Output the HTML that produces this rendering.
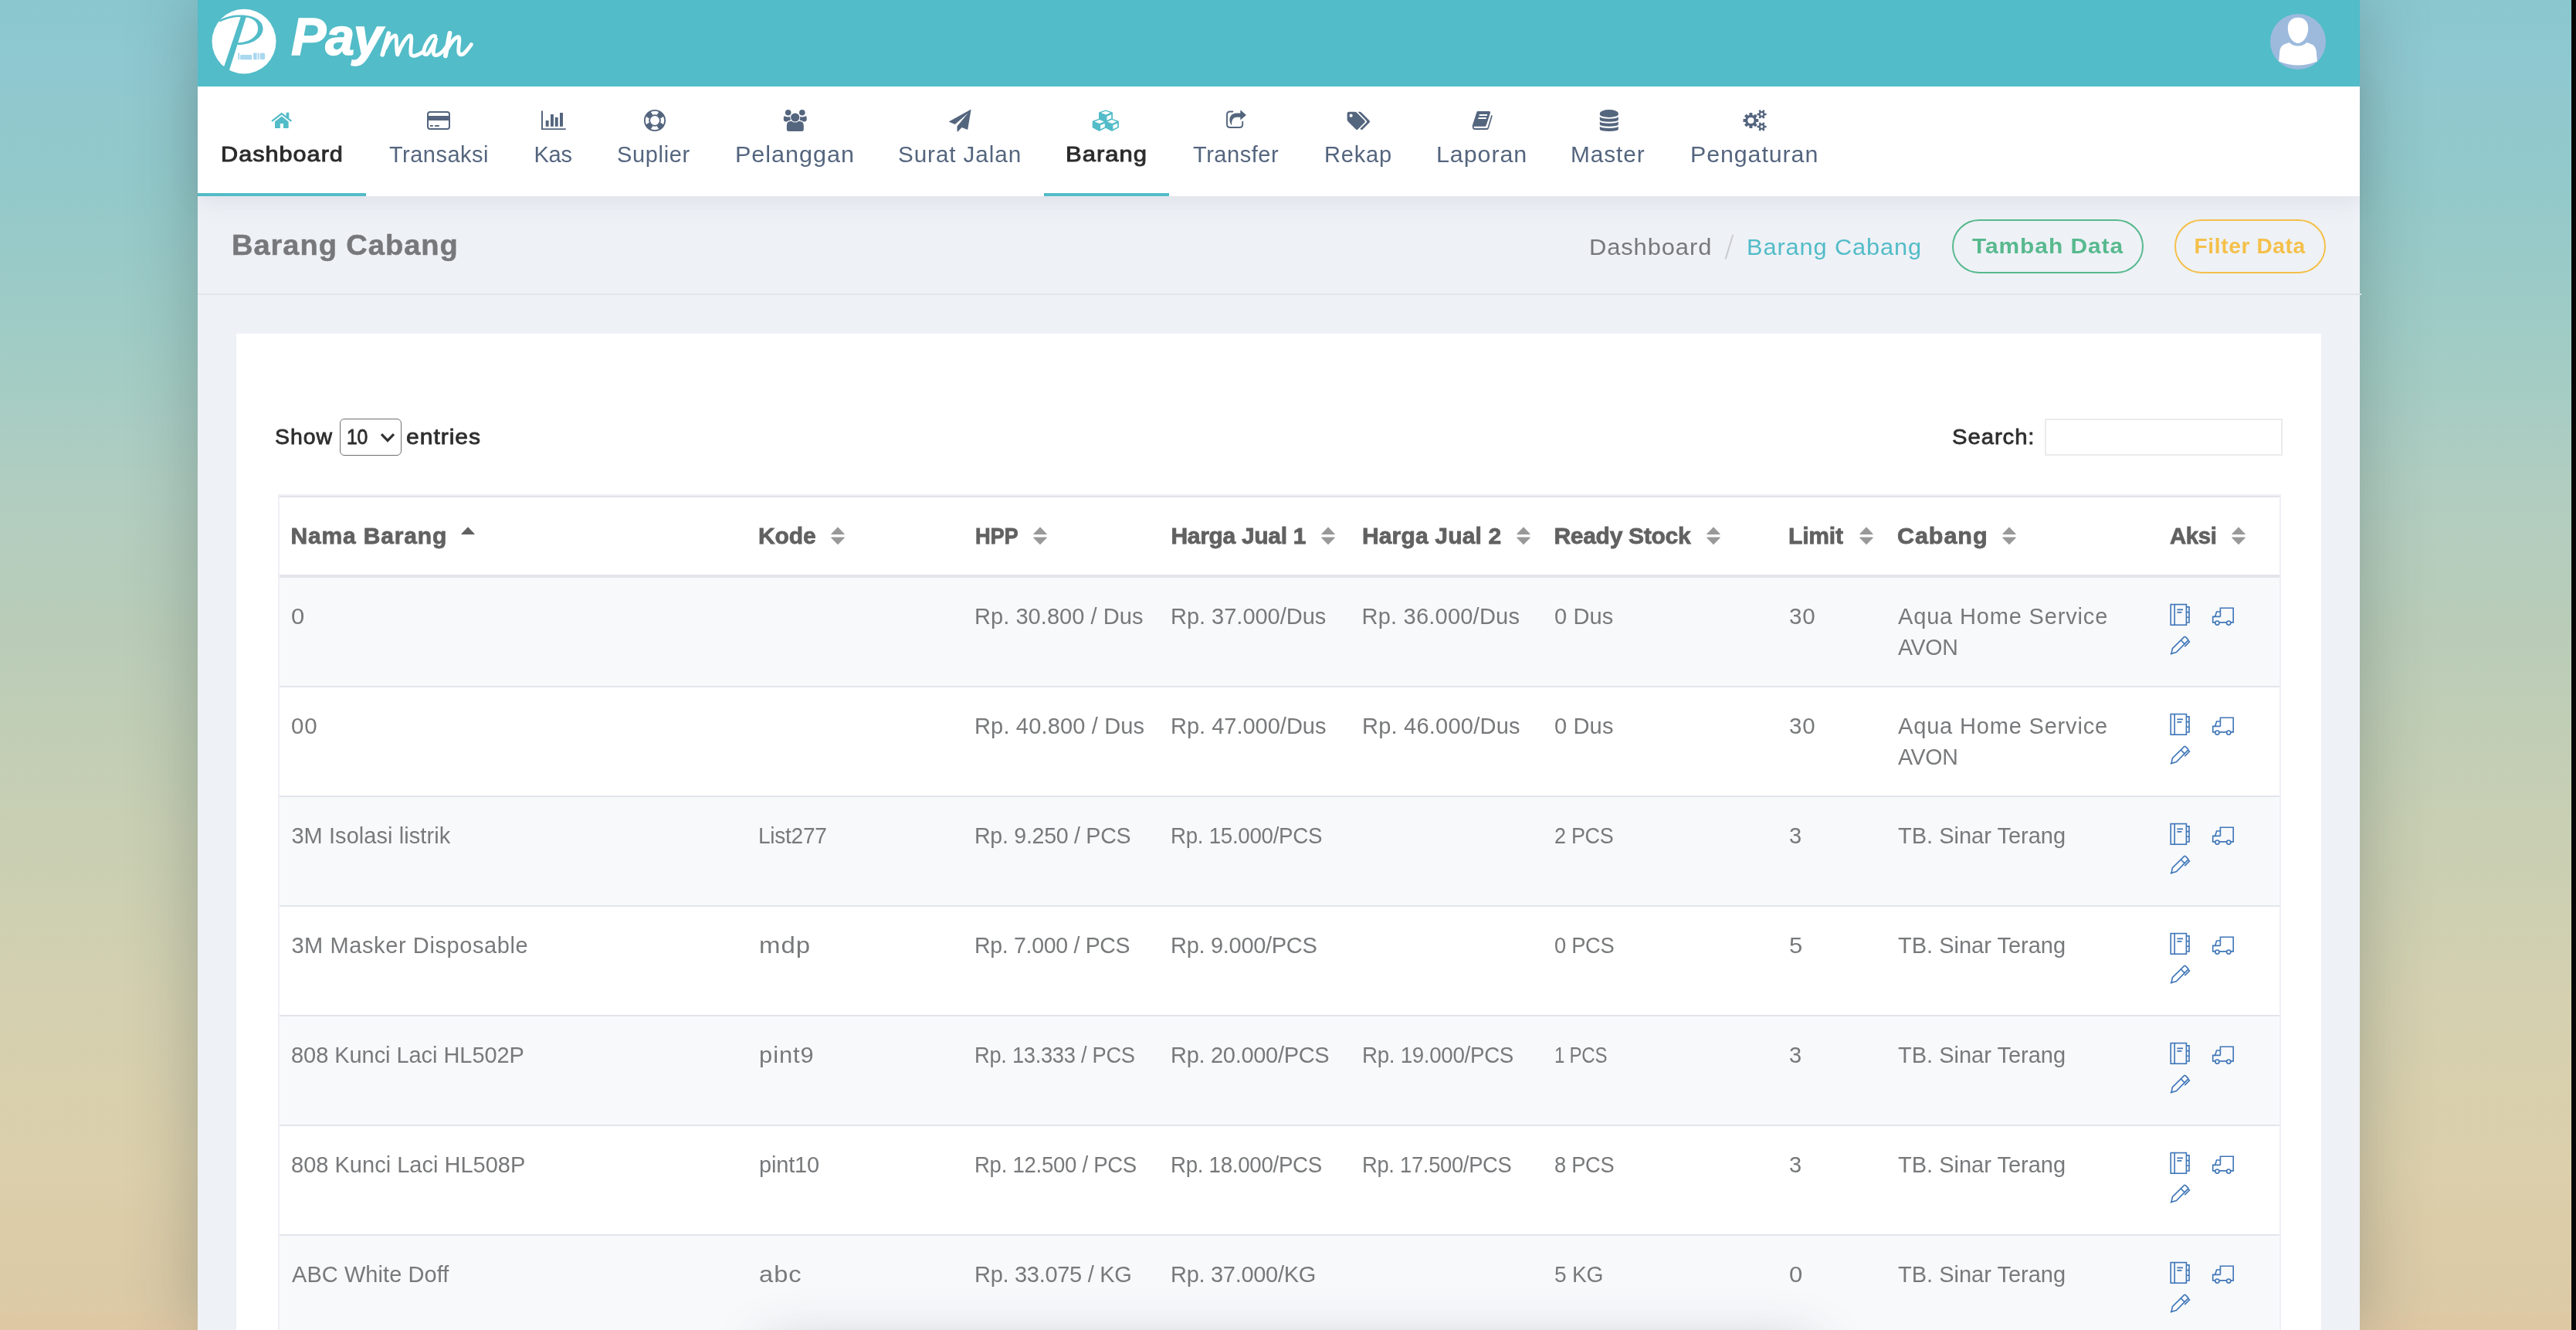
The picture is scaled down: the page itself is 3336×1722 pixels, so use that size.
<!DOCTYPE html>
<html><head><meta charset="utf-8"><title>Payman - Barang Cabang</title>
<style>
html,body{margin:0;padding:0}
body{width:3336px;height:1722px;overflow:hidden;position:relative;font-family:"Liberation Sans",sans-serif;
background:linear-gradient(180deg,#8ac7cf 0%,#8fc8d0 5%,#93c9ca 14%,#a3ccc4 28%,#b0cdc1 36%,#b9ccb8 47%,#c8cfb3 62%,#d4d0b0 75%,#dccfab 88%,#dccca8 93%,#dccaa6 98%,#dfc7a3 100%)}
.a{position:absolute}
.t{position:absolute;white-space:nowrap;line-height:1;display:block;transform-origin:0 50%}
#wrap{position:absolute;left:256px;top:0;width:2800px;height:1722px;background:#eef1f6;box-shadow:0 0 80px 4px rgba(40,60,60,.28)}
#page{position:absolute;left:0;top:0;width:3336px;height:1722px;overflow:hidden;will-change:transform}
</style></head><body>
<div id="wrap"></div>
<div id="page">
<!-- nav -->
<div class="a" style="left:256px;top:112px;width:2800px;height:142px;background:#fff;box-shadow:0 2px 34px rgba(90,100,120,.14)"></div>
<div class="a" style="left:256px;top:250px;width:218px;height:4px;background:#52bcc8"></div>
<div class="a" style="left:1352px;top:250px;width:162px;height:4px;background:#52bcc8"></div>
<!-- home 352-377 x 146-166 -->
<svg class="a" style="left:351px;top:144px" width="28" height="24" viewBox="0 0 28 24" fill="#52bcc8">
<path d="M1.1 12.8L13.8 3.2L26.4 12.8" stroke="#52bcc8" stroke-width="2.3" fill="none" stroke-linejoin="miter"/>
<rect x="19.6" y="1.7" width="3.7" height="7"/>
<path d="M5 13.4L13.8 6.6L22.6 13.4V21.4Q22.6 22.1 21.9 22.1H16V16H11.8V22.1H5.7Q5 22.1 5 21.4Z"/>
</svg>
<!-- credit card 553-582.7 x 144-168 -->
<svg class="a" style="left:552px;top:143px" width="32" height="26" viewBox="0 0 32 26">
<rect x="2" y="2" width="28" height="22" rx="3" ry="3" fill="none" stroke="#54657e" stroke-width="2"/>
<rect x="2" y="7" width="28" height="6" fill="#54657e"/>
<rect x="5" y="19" width="3.8" height="1.9" fill="#54657e"/><rect x="11" y="19" width="5.8" height="1.9" fill="#54657e"/>
</svg>
<!-- bar chart 701-733 x 143.6-168 -->
<svg class="a" style="left:700px;top:142px" width="34" height="27" viewBox="0 0 34 27" fill="#54657e">
<path d="M1 1.6H3V24.2H32.8V26H1Z"/>
<rect x="6.7" y="14" width="3.9" height="7.8"/><rect x="13" y="6" width="3.9" height="15.8"/><rect x="18.8" y="9.9" width="3.9" height="11.9"/><rect x="25" y="4" width="4" height="17.8"/>
</svg>
<!-- life ring center 847.9,155.9 r 14.1 -->
<svg class="a" style="left:832px;top:140px" width="32" height="32" viewBox="-16 -16 32 32">
<circle r="13.1" fill="none" stroke="#54657e" stroke-width="1.9"/>
<circle r="6.9" fill="none" stroke="#54657e" stroke-width="1.9"/>
<g fill="#54657e">
<path id="lr" d="M-3.3 -7.2H3.3L4.4 -12.7H-4.4Z" transform="rotate(45)"/>
<use href="#lr" transform="rotate(90)"/><use href="#lr" transform="rotate(180)"/><use href="#lr" transform="rotate(270)"/>
</g></svg>
<!-- users 1014.6-1045 x 141.6-170 -->
<svg class="a" style="left:1013px;top:140px" width="34" height="32" viewBox="0 0 34 32" fill="#54657e">
<circle cx="7.7" cy="5.8" r="3.8"/><circle cx="25.8" cy="5.8" r="3.8"/>
<path d="M1.9 11.4Q2.4 10.2 3.4 10.4Q7.7 12.4 11 10.6V17.6H4.4Q1.8 17.4 1.8 15Z"/>
<path d="M31.6 11.4Q31.1 10.2 30.1 10.4Q25.8 12.4 22.5 10.6V17.6H29.1Q31.7 17.4 31.7 15Z"/>
<path d="M5.2 27.4V23C5.2 18.6 7.3 16.4 10.5 16.3H22.9C26.1 16.4 28.4 18.6 28.4 23V27.4Q28.4 30.5 25.2 30.5H8.4Q5.2 30.5 5.2 27.4Z" stroke="#fff" stroke-width="1.2"/>
<circle cx="16.7" cy="12" r="6.6" fill="#fff"/>
<circle cx="16.7" cy="12" r="5.6"/>
</svg>
<!-- paper plane 1229-1257.3 x 141.7-170.2 -->
<svg class="a" style="left:1228px;top:140px" width="32" height="32" viewBox="0 0 32 32" fill="#54657e">
<path d="M29.2 1.8Q29.6 1.5 29.5 2.2L25.3 27.2Q25.1 28 24.4 27.7L17.6 24.9L12.6 30.2Q11.6 31 11.5 29.7V23.4L25.6 6.4L8.8 21.1L1.6 18.1Q0.6 17.5 1.6 16.9Z"/>
</svg>
<!-- cubes 1415-1449 x 141.7-169.8 -->
<svg class="a" style="left:1414px;top:140px" width="36" height="32" viewBox="0 0 36 32">
<g transform="translate(17.96 -11.37)"><path d="M0 14.6L8.1 17.4V24.8L0 28.9L-8.1 24.8V17.4Z" fill="#52bcc8" stroke="#52bcc8" stroke-width="1.8" stroke-linejoin="round"/><path d="M-6 17.45L0 15.1L6.2 17.45L0.2 19.95Z" fill="#fff"/><path d="M1.45 22.1L7.2 19.65V24.5L1.45 27.3Z" fill="#fff"/></g>
<g transform="translate(9.66 0)"><path d="M0 14.6L8.1 17.4V24.8L0 28.9L-8.1 24.8V17.4Z" fill="#52bcc8" stroke="#52bcc8" stroke-width="1.8" stroke-linejoin="round"/><path d="M-6 17.45L0 15.1L6.2 17.45L0.2 19.95Z" fill="#fff"/><path d="M1.45 22.1L7.2 19.65V24.5L1.45 27.3Z" fill="#fff"/></g>
<g transform="translate(25.9 0)"><path d="M0 14.6L8.1 17.4V24.8L0 28.9L-8.1 24.8V17.4Z" fill="#52bcc8" stroke="#52bcc8" stroke-width="1.8" stroke-linejoin="round"/><path d="M-6 17.45L0 15.1L6.2 17.45L0.2 19.95Z" fill="#fff"/><path d="M1.45 22.1L7.2 19.65V24.5L1.45 27.3Z" fill="#fff"/></g>
</svg>
<!-- share-square-o 1587.8-1614 x 141.7-166 -->
<svg class="a" style="left:1586px;top:140px" width="30" height="28" viewBox="0 0 30 28">
<path d="M10.4 4.45H7Q2.95 4.45 2.95 8.5V21Q2.95 25 7 25H19.2Q23.2 25 23.2 21V17.8" fill="none" stroke="#54657e" stroke-width="1.9" stroke-linecap="round"/>
<path d="M20.3 2.3L27.9 9L20.3 15.6V11.7H15.5C11.5 11.9 9.6 14.6 9.2 18.2Q9.1 20.5 9 21.8Q8.6 22.1 8.3 21.4C6.4 17.6 5.6 13.6 7.6 10.4C9.4 7.4 12.2 6.5 15.5 6.4H20.3Z" fill="#54657e"/>
</svg>
<!-- tags 1744.5-1774.7 x 143.6-168 -->
<svg class="a" style="left:1743px;top:142.7px" width="34" height="28" viewBox="0 0 34 28" fill="#54657e">
<path d="M1.6 4.4Q1.6 1.8 4.2 1.8H11.6Q13 1.8 14.2 3L24.4 13.2Q25.4 14.4 24.4 15.6L15.4 24.6Q14.2 25.6 13 24.6L2.800000000000001 14.4Q1.6 13.2 1.6 11.8ZM6.6 4.6A2.1 2.1 0 1 0 6.6 8.8A2.1 2.1 0 1 0 6.6 4.600000000000001Z" fill-rule="evenodd"/>
<path d="M15.4 1.8H17.8Q19.2 1.8 20.4 3L30.6 13.2Q31.6 14.4 30.6 15.6L21.6 24.6Q20.4 25.6 19.2 24.6L18.4 23.8L26.8 15.4Q27.6 14.4 26.8 13.4Z"/>
</svg>
<!-- book 1906.3-1932.4 x 143.6-168 -->
<svg class="a" style="left:1905px;top:142px" width="30" height="28" viewBox="0 0 30 28" fill="#54657e">
<path d="M8.8 2H23.2Q25.6 2 24.9 4.4L19.7 20.3Q19.2 21.8 17.5 21.8H4.4Q3.3 22.3 3.6 23.2Q4 24.1 5 24.1H20Q21.2 24.1 21.6 23L26.1 7.8Q26.5 6.5 27.2 7.1Q27.9 7.8 27.6 8.8L23 24Q22.4 25.9 20.4 25.9H4.8Q2 25.9 1.8 22.8Q1.6 21 2 19.8L7.5 3Q7.9 2 8.8 2Z"/>
<path d="M10.9 5.9H21.3L20.7 7.9H10.3ZM9.7 10H20.1L19.5 12H9.1Z" fill="#fff"/>
</svg>
<!-- database 2071.3-2096.2 x 141.8-169.7 -->
<svg class="a" style="left:2070px;top:140px" width="28" height="32" viewBox="0 0 28 32" fill="#54657e">
<path d="M1.8 6.9A12 4.85 0 0 1 25.8 6.9V8.2A12 3.7 0 0 1 1.8 8.2Z"/>
<path d="M1.8 11.10A12 2.6 0 0 0 25.8 11.10V15.20A12 2.5 0 0 1 1.8 15.20Z"/>
<path d="M1.8 17.24A12 2.6 0 0 0 25.8 17.24V21.34A12 2.5 0 0 1 1.8 21.34Z"/>
<path d="M1.8 23.38A12 2.6 0 0 0 25.8 23.38V27.48A12 2.5 0 0 1 1.8 27.48Z"/>
</svg>
<!-- cogs 2257.4-2288.4 x 141.8-170 -->
<svg class="a" style="left:2256px;top:140px" width="34" height="32" viewBox="0 0 34 32" fill="#54657e">
<g transform="translate(11.4 16.0)"><path fill-rule="evenodd" d="M-7.3 0A7.3 7.3 0 1 0 7.3 0A7.3 7.3 0 1 0 -7.3 0ZM-4.1 0A4.1 4.1 0 1 0 4.1 0A4.1 4.1 0 1 0 -4.1 0Z"/><rect x="-2.00" y="-9.90" width="4.00" height="3.80" rx="0.5" transform="rotate(0.0)"/><rect x="-2.00" y="-9.90" width="4.00" height="3.80" rx="0.5" transform="rotate(45.0)"/><rect x="-2.00" y="-9.90" width="4.00" height="3.80" rx="0.5" transform="rotate(90.0)"/><rect x="-2.00" y="-9.90" width="4.00" height="3.80" rx="0.5" transform="rotate(135.0)"/><rect x="-2.00" y="-9.90" width="4.00" height="3.80" rx="0.5" transform="rotate(180.0)"/><rect x="-2.00" y="-9.90" width="4.00" height="3.80" rx="0.5" transform="rotate(225.0)"/><rect x="-2.00" y="-9.90" width="4.00" height="3.80" rx="0.5" transform="rotate(270.0)"/><rect x="-2.00" y="-9.90" width="4.00" height="3.80" rx="0.5" transform="rotate(315.0)"/></g>
<g transform="translate(25.5 7.9)"><path fill-rule="evenodd" d="M-3.9 0A3.9 3.9 0 1 0 3.9 0A3.9 3.9 0 1 0 -3.9 0ZM-1.8 0A1.8 1.8 0 1 0 1.8 0A1.8 1.8 0 1 0 -1.8 0Z"/><rect x="-1.25" y="-6.00" width="2.50" height="3.30" rx="0.5" transform="rotate(30.0)"/><rect x="-1.25" y="-6.00" width="2.50" height="3.30" rx="0.5" transform="rotate(90.0)"/><rect x="-1.25" y="-6.00" width="2.50" height="3.30" rx="0.5" transform="rotate(150.0)"/><rect x="-1.25" y="-6.00" width="2.50" height="3.30" rx="0.5" transform="rotate(210.0)"/><rect x="-1.25" y="-6.00" width="2.50" height="3.30" rx="0.5" transform="rotate(270.0)"/><rect x="-1.25" y="-6.00" width="2.50" height="3.30" rx="0.5" transform="rotate(330.0)"/></g>
<g transform="translate(25.5 23.95)"><path fill-rule="evenodd" d="M-3.9 0A3.9 3.9 0 1 0 3.9 0A3.9 3.9 0 1 0 -3.9 0ZM-1.8 0A1.8 1.8 0 1 0 1.8 0A1.8 1.8 0 1 0 -1.8 0Z"/><rect x="-1.25" y="-6.00" width="2.50" height="3.30" rx="0.5" transform="rotate(30.0)"/><rect x="-1.25" y="-6.00" width="2.50" height="3.30" rx="0.5" transform="rotate(90.0)"/><rect x="-1.25" y="-6.00" width="2.50" height="3.30" rx="0.5" transform="rotate(150.0)"/><rect x="-1.25" y="-6.00" width="2.50" height="3.30" rx="0.5" transform="rotate(210.0)"/><rect x="-1.25" y="-6.00" width="2.50" height="3.30" rx="0.5" transform="rotate(270.0)"/><rect x="-1.25" y="-6.00" width="2.50" height="3.30" rx="0.5" transform="rotate(330.0)"/></g>
</svg>

<div class="a" style="left:256px;top:0;width:2800px;height:112px;background:#52bcc8"></div>
<svg class="a" style="left:266px;top:4px" width="100" height="100" viewBox="0 0 1330 1330">
<ellipse cx="665" cy="660" rx="552" ry="556" fill="#fff"/>
<g fill="#52bcc8">
<path d="M612 226L702 238L390 1222L296 1168Z"/>
<path d="M236 296C400 210 560 196 700 213C880 233 992 320 992 442C992 592 800 724 556 718L540 682C760 684 902 572 906 442C908 330 830 260 700 246C560 230 420 244 252 326Z"/>
</g>
<g fill="#a9d8f0"><rect x="562" y="858" width="26" height="116"/><rect x="600" y="892" width="200" height="82" rx="14"/><rect x="826" y="858" width="60" height="116" rx="10"/><rect x="900" y="858" width="26" height="116"/><rect x="940" y="858" width="86" height="116" rx="30"/></g>
</svg>
<span class="t" style="left:377px;top:12.9px;font-size:68px;font-weight:700;font-style:italic;color:#fff;letter-spacing:-1.2px;-webkit-text-stroke:1.4px #fff">Pay</span>
<svg class="a" style="left:480px;top:20px" width="150" height="75" viewBox="0 0 2576 1288" fill="none" stroke="#fff" stroke-width="84" stroke-linecap="round" stroke-linejoin="round">
<path d="M400 400L262 872" stroke-width="100"/>
<path d="M330 720C400 570 480 452 548 444C592 444 556 700 596 872"/>
<path d="M604 860C660 700 800 452 878 444C950 444 858 800 900 872C930 925 1020 900 1180 800"/>
<path d="M1436 462C1350 410 1200 650 1182 800C1172 896 1260 880 1300 820C1380 700 1430 580 1452 524C1420 650 1380 800 1400 856C1430 925 1560 880 1680 700"/>
<path d="M1760 392L1664 900" stroke-width="100"/>
<path d="M1720 730C1800 566 1900 476 1950 476C2008 484 1930 760 1960 828C1990 896 2060 880 2120 800C2170 740 2210 690 2240 644" />
</svg>

<svg class="a" style="left:2940px;top:18px" width="72" height="72" viewBox="0 0 72 72">
<defs><clipPath id="avc"><circle cx="36" cy="36" r="36"/></clipPath></defs>
<circle cx="36" cy="36" r="36" fill="#9dbadd"/>
<g clip-path="url(#avc)" fill="#fff">
<path d="M36 4.8C45 4.8 49.6 11 49.2 19.6C48.8 29 43 38 36 38C29 38 23.200000000000003 29 22.8 19.6C22.4 11 27 4.8 36 4.8Z"/>
<path d="M24.6 37C27 39.6 31 41.6 36 41.6C41 41.6 45 39.6 47.4 37L54 39.6C58 41.4 59.2 45 59.8 49L60.8 61.6Q48 66.6 36 66.6Q24 66.6 11.2 61.6L12.2 49C12.8 45 14 41.4 18 39.6Z"/>
</g></svg>

<!-- title bar -->
<div class="a" style="left:256px;top:380px;width:2802px;height:2px;background:#e2e5ea"></div>
<div class="a" style="left:2528px;top:284px;width:244px;height:66px;border:2px solid #57b98e;border-radius:36px"></div>
<div class="a" style="left:2816px;top:284px;width:192px;height:66px;border:2px solid #f4c04a;border-radius:36px"></div>
<svg class="a" style="left:2230px;top:300px" width="20" height="40" viewBox="0 0 20 40"><path d="M4.6 35.5L14.2 4" stroke="#c9cbce" stroke-width="2" fill="none"/></svg>
<!-- card -->
<div class="a" style="left:306px;top:432px;width:2700px;height:1300px;background:#fff"></div>
<!-- select -->
<div class="a" style="left:440px;top:542px;width:77.5px;height:45.5px;border:1.5px solid #6f6f6f;border-radius:6px;background:#fff"></div>
<svg class="a" style="left:490px;top:558px" width="24" height="18" viewBox="0 0 24 18"><path d="M4 4.2L12 12.4L20 4.2" stroke="#333" stroke-width="3.2" fill="none"/></svg>
<!-- search -->
<div class="a" style="left:2648px;top:542px;width:304px;height:44px;border:2px solid #ebebeb;background:#fff"></div>
<!-- table frame -->
<div class="a" style="left:360px;top:640px;width:2594px;height:1100px;border-left:2px solid #eff0f6;border-right:2px solid #eff0f6;border-top:2px solid #eff0f6;box-sizing:border-box;background:#fff"></div>
<div class="a" style="left:362px;top:642px;width:2590px;height:2px;background:#e3e4e9"></div>
<div class="a" style="left:362px;top:744px;width:2590px;height:4px;background:#e4e5ea"></div>
<div class="a" style="left:362px;top:748px;width:2590px;height:140px;background:#f8f9fb"></div>
<div class="a" style="left:362px;top:890px;width:2590px;height:140px;background:#ffffff"></div>
<div class="a" style="left:362px;top:888px;width:2590px;height:2px;background:#e3e5ea"></div>
<div class="a" style="left:362px;top:1032px;width:2590px;height:140px;background:#f8f9fb"></div>
<div class="a" style="left:362px;top:1030px;width:2590px;height:2px;background:#e3e5ea"></div>
<div class="a" style="left:362px;top:1174px;width:2590px;height:140px;background:#ffffff"></div>
<div class="a" style="left:362px;top:1172px;width:2590px;height:2px;background:#e3e5ea"></div>
<div class="a" style="left:362px;top:1316px;width:2590px;height:140px;background:#f8f9fb"></div>
<div class="a" style="left:362px;top:1314px;width:2590px;height:2px;background:#e3e5ea"></div>
<div class="a" style="left:362px;top:1458px;width:2590px;height:140px;background:#ffffff"></div>
<div class="a" style="left:362px;top:1456px;width:2590px;height:2px;background:#e3e5ea"></div>
<div class="a" style="left:362px;top:1600px;width:2590px;height:140px;background:#f8f9fb"></div>
<div class="a" style="left:362px;top:1598px;width:2590px;height:2px;background:#e3e5ea"></div>

<svg class="a" style="left:1075.8px;top:682.1px" width="18" height="24" viewBox="0 0 18 24"><path d="M9 0.3L17.6 9.2Q18 10 17 10H1Q0 10 .4 9.2Z" fill="#999"/><path d="M9 23.3L17.6 14.4Q18 13.6 17 13.6H1Q0 13.6 .4 14.4Z" fill="#999"/></svg>
<svg class="a" style="left:1338.0px;top:682.1px" width="18" height="24" viewBox="0 0 18 24"><path d="M9 0.3L17.6 9.2Q18 10 17 10H1Q0 10 .4 9.2Z" fill="#999"/><path d="M9 23.3L17.6 14.4Q18 13.6 17 13.6H1Q0 13.6 .4 14.4Z" fill="#999"/></svg>
<svg class="a" style="left:1710.6px;top:682.1px" width="18" height="24" viewBox="0 0 18 24"><path d="M9 0.3L17.6 9.2Q18 10 17 10H1Q0 10 .4 9.2Z" fill="#999"/><path d="M9 23.3L17.6 14.4Q18 13.6 17 13.6H1Q0 13.6 .4 14.4Z" fill="#999"/></svg>
<svg class="a" style="left:1964.3px;top:682.1px" width="18" height="24" viewBox="0 0 18 24"><path d="M9 0.3L17.6 9.2Q18 10 17 10H1Q0 10 .4 9.2Z" fill="#999"/><path d="M9 23.3L17.6 14.4Q18 13.6 17 13.6H1Q0 13.6 .4 14.4Z" fill="#999"/></svg>
<svg class="a" style="left:2209.6px;top:682.1px" width="18" height="24" viewBox="0 0 18 24"><path d="M9 0.3L17.6 9.2Q18 10 17 10H1Q0 10 .4 9.2Z" fill="#999"/><path d="M9 23.3L17.6 14.4Q18 13.6 17 13.6H1Q0 13.6 .4 14.4Z" fill="#999"/></svg>
<svg class="a" style="left:2407.5px;top:682.1px" width="18" height="24" viewBox="0 0 18 24"><path d="M9 0.3L17.6 9.2Q18 10 17 10H1Q0 10 .4 9.2Z" fill="#999"/><path d="M9 23.3L17.6 14.4Q18 13.6 17 13.6H1Q0 13.6 .4 14.4Z" fill="#999"/></svg>
<svg class="a" style="left:2592.5px;top:682.1px" width="18" height="24" viewBox="0 0 18 24"><path d="M9 0.3L17.6 9.2Q18 10 17 10H1Q0 10 .4 9.2Z" fill="#999"/><path d="M9 23.3L17.6 14.4Q18 13.6 17 13.6H1Q0 13.6 .4 14.4Z" fill="#999"/></svg>
<svg class="a" style="left:2890.3px;top:682.1px" width="18" height="24" viewBox="0 0 18 24"><path d="M9 0.3L17.6 9.2Q18 10 17 10H1Q0 10 .4 9.2Z" fill="#999"/><path d="M9 23.3L17.6 14.4Q18 13.6 17 13.6H1Q0 13.6 .4 14.4Z" fill="#999"/></svg><svg class="a" style="left:597px;top:682.1px" width="18" height="10" viewBox="0 0 18 10"><path d="M9 0.3L17.6 9.2Q18 10 17 10H1Q0 10 .4 9.2Z" fill="#616161"/></svg>
<svg class="a" style="left:2809px;top:780px" width="29" height="32" viewBox="0 0 29 32" fill="none" stroke="#4077b8" stroke-width="1.65"><rect x="2.2" y="2.6" width="20.2" height="26.6"/><path d="M7.2 2.6V29.2"/><path d="M22.4 5.8H26V26H22.4"/><path d="M22.4 12.6H26M22.4 19.2H26"/><path d="M10.4 9.4H18M10.4 12.8H16.4"/></svg><svg class="a" style="left:2863px;top:784px" width="32" height="28" viewBox="0 0 32 28" fill="none" stroke="#4077b8" stroke-width="1.65"><path d="M12.4 14.4V3.2H29.2V21.8H26"/><path d="M12.4 14.4H5.6L7.6 8H12.4"/><path d="M5.6 14.4H2.7V21.8H5.6M11.2 21.8H20.4"/><circle cx="8.4" cy="22.6" r="2.6"/><circle cx="23.2" cy="22.6" r="2.6"/></svg><svg class="a" style="left:2809px;top:822px" width="29" height="28" viewBox="0 0 29 28" fill="none" stroke="#4077b8" stroke-width="1.65" stroke-linejoin="miter"><path d="M3 24.4L4.4 17.6L19.6 2.6Q20.4 1.9 21.2 2.6L24.4 5.8Q25 6.6 24.4 7.4L9.4 22.6Z"/><path d="M15.4 7L20.2 11.8"/><path d="M2 25.2L4 23.4"/><path d="M24.6 7.2L26.4 9L20.2 15.2"/></svg>
<svg class="a" style="left:2809px;top:922px" width="29" height="32" viewBox="0 0 29 32" fill="none" stroke="#4077b8" stroke-width="1.65"><rect x="2.2" y="2.6" width="20.2" height="26.6"/><path d="M7.2 2.6V29.2"/><path d="M22.4 5.8H26V26H22.4"/><path d="M22.4 12.6H26M22.4 19.2H26"/><path d="M10.4 9.4H18M10.4 12.8H16.4"/></svg><svg class="a" style="left:2863px;top:926px" width="32" height="28" viewBox="0 0 32 28" fill="none" stroke="#4077b8" stroke-width="1.65"><path d="M12.4 14.4V3.2H29.2V21.8H26"/><path d="M12.4 14.4H5.6L7.6 8H12.4"/><path d="M5.6 14.4H2.7V21.8H5.6M11.2 21.8H20.4"/><circle cx="8.4" cy="22.6" r="2.6"/><circle cx="23.2" cy="22.6" r="2.6"/></svg><svg class="a" style="left:2809px;top:964px" width="29" height="28" viewBox="0 0 29 28" fill="none" stroke="#4077b8" stroke-width="1.65" stroke-linejoin="miter"><path d="M3 24.4L4.4 17.6L19.6 2.6Q20.4 1.9 21.2 2.6L24.4 5.8Q25 6.6 24.4 7.4L9.4 22.6Z"/><path d="M15.4 7L20.2 11.8"/><path d="M2 25.2L4 23.4"/><path d="M24.6 7.2L26.4 9L20.2 15.2"/></svg>
<svg class="a" style="left:2809px;top:1064px" width="29" height="32" viewBox="0 0 29 32" fill="none" stroke="#4077b8" stroke-width="1.65"><rect x="2.2" y="2.6" width="20.2" height="26.6"/><path d="M7.2 2.6V29.2"/><path d="M22.4 5.8H26V26H22.4"/><path d="M22.4 12.6H26M22.4 19.2H26"/><path d="M10.4 9.4H18M10.4 12.8H16.4"/></svg><svg class="a" style="left:2863px;top:1068px" width="32" height="28" viewBox="0 0 32 28" fill="none" stroke="#4077b8" stroke-width="1.65"><path d="M12.4 14.4V3.2H29.2V21.8H26"/><path d="M12.4 14.4H5.6L7.6 8H12.4"/><path d="M5.6 14.4H2.7V21.8H5.6M11.2 21.8H20.4"/><circle cx="8.4" cy="22.6" r="2.6"/><circle cx="23.2" cy="22.6" r="2.6"/></svg><svg class="a" style="left:2809px;top:1106px" width="29" height="28" viewBox="0 0 29 28" fill="none" stroke="#4077b8" stroke-width="1.65" stroke-linejoin="miter"><path d="M3 24.4L4.4 17.6L19.6 2.6Q20.4 1.9 21.2 2.6L24.4 5.8Q25 6.6 24.4 7.4L9.4 22.6Z"/><path d="M15.4 7L20.2 11.8"/><path d="M2 25.2L4 23.4"/><path d="M24.6 7.2L26.4 9L20.2 15.2"/></svg>
<svg class="a" style="left:2809px;top:1206px" width="29" height="32" viewBox="0 0 29 32" fill="none" stroke="#4077b8" stroke-width="1.65"><rect x="2.2" y="2.6" width="20.2" height="26.6"/><path d="M7.2 2.6V29.2"/><path d="M22.4 5.8H26V26H22.4"/><path d="M22.4 12.6H26M22.4 19.2H26"/><path d="M10.4 9.4H18M10.4 12.8H16.4"/></svg><svg class="a" style="left:2863px;top:1210px" width="32" height="28" viewBox="0 0 32 28" fill="none" stroke="#4077b8" stroke-width="1.65"><path d="M12.4 14.4V3.2H29.2V21.8H26"/><path d="M12.4 14.4H5.6L7.6 8H12.4"/><path d="M5.6 14.4H2.7V21.8H5.6M11.2 21.8H20.4"/><circle cx="8.4" cy="22.6" r="2.6"/><circle cx="23.2" cy="22.6" r="2.6"/></svg><svg class="a" style="left:2809px;top:1248px" width="29" height="28" viewBox="0 0 29 28" fill="none" stroke="#4077b8" stroke-width="1.65" stroke-linejoin="miter"><path d="M3 24.4L4.4 17.6L19.6 2.6Q20.4 1.9 21.2 2.6L24.4 5.8Q25 6.6 24.4 7.4L9.4 22.6Z"/><path d="M15.4 7L20.2 11.8"/><path d="M2 25.2L4 23.4"/><path d="M24.6 7.2L26.4 9L20.2 15.2"/></svg>
<svg class="a" style="left:2809px;top:1348px" width="29" height="32" viewBox="0 0 29 32" fill="none" stroke="#4077b8" stroke-width="1.65"><rect x="2.2" y="2.6" width="20.2" height="26.6"/><path d="M7.2 2.6V29.2"/><path d="M22.4 5.8H26V26H22.4"/><path d="M22.4 12.6H26M22.4 19.2H26"/><path d="M10.4 9.4H18M10.4 12.8H16.4"/></svg><svg class="a" style="left:2863px;top:1352px" width="32" height="28" viewBox="0 0 32 28" fill="none" stroke="#4077b8" stroke-width="1.65"><path d="M12.4 14.4V3.2H29.2V21.8H26"/><path d="M12.4 14.4H5.6L7.6 8H12.4"/><path d="M5.6 14.4H2.7V21.8H5.6M11.2 21.8H20.4"/><circle cx="8.4" cy="22.6" r="2.6"/><circle cx="23.2" cy="22.6" r="2.6"/></svg><svg class="a" style="left:2809px;top:1390px" width="29" height="28" viewBox="0 0 29 28" fill="none" stroke="#4077b8" stroke-width="1.65" stroke-linejoin="miter"><path d="M3 24.4L4.4 17.6L19.6 2.6Q20.4 1.9 21.2 2.6L24.4 5.8Q25 6.6 24.4 7.4L9.4 22.6Z"/><path d="M15.4 7L20.2 11.8"/><path d="M2 25.2L4 23.4"/><path d="M24.6 7.2L26.4 9L20.2 15.2"/></svg>
<svg class="a" style="left:2809px;top:1490px" width="29" height="32" viewBox="0 0 29 32" fill="none" stroke="#4077b8" stroke-width="1.65"><rect x="2.2" y="2.6" width="20.2" height="26.6"/><path d="M7.2 2.6V29.2"/><path d="M22.4 5.8H26V26H22.4"/><path d="M22.4 12.6H26M22.4 19.2H26"/><path d="M10.4 9.4H18M10.4 12.8H16.4"/></svg><svg class="a" style="left:2863px;top:1494px" width="32" height="28" viewBox="0 0 32 28" fill="none" stroke="#4077b8" stroke-width="1.65"><path d="M12.4 14.4V3.2H29.2V21.8H26"/><path d="M12.4 14.4H5.6L7.6 8H12.4"/><path d="M5.6 14.4H2.7V21.8H5.6M11.2 21.8H20.4"/><circle cx="8.4" cy="22.6" r="2.6"/><circle cx="23.2" cy="22.6" r="2.6"/></svg><svg class="a" style="left:2809px;top:1532px" width="29" height="28" viewBox="0 0 29 28" fill="none" stroke="#4077b8" stroke-width="1.65" stroke-linejoin="miter"><path d="M3 24.4L4.4 17.6L19.6 2.6Q20.4 1.9 21.2 2.6L24.4 5.8Q25 6.6 24.4 7.4L9.4 22.6Z"/><path d="M15.4 7L20.2 11.8"/><path d="M2 25.2L4 23.4"/><path d="M24.6 7.2L26.4 9L20.2 15.2"/></svg>
<svg class="a" style="left:2809px;top:1632px" width="29" height="32" viewBox="0 0 29 32" fill="none" stroke="#4077b8" stroke-width="1.65"><rect x="2.2" y="2.6" width="20.2" height="26.6"/><path d="M7.2 2.6V29.2"/><path d="M22.4 5.8H26V26H22.4"/><path d="M22.4 12.6H26M22.4 19.2H26"/><path d="M10.4 9.4H18M10.4 12.8H16.4"/></svg><svg class="a" style="left:2863px;top:1636px" width="32" height="28" viewBox="0 0 32 28" fill="none" stroke="#4077b8" stroke-width="1.65"><path d="M12.4 14.4V3.2H29.2V21.8H26"/><path d="M12.4 14.4H5.6L7.6 8H12.4"/><path d="M5.6 14.4H2.7V21.8H5.6M11.2 21.8H20.4"/><circle cx="8.4" cy="22.6" r="2.6"/><circle cx="23.2" cy="22.6" r="2.6"/></svg><svg class="a" style="left:2809px;top:1674px" width="29" height="28" viewBox="0 0 29 28" fill="none" stroke="#4077b8" stroke-width="1.65" stroke-linejoin="miter"><path d="M3 24.4L4.4 17.6L19.6 2.6Q20.4 1.9 21.2 2.6L24.4 5.8Q25 6.6 24.4 7.4L9.4 22.6Z"/><path d="M15.4 7L20.2 11.8"/><path d="M2 25.2L4 23.4"/><path d="M24.6 7.2L26.4 9L20.2 15.2"/></svg>
<span class="t" style="left:285.66px;top:186.30px;font-size:28px;font-weight:400;color:#2b2b2b;transform:scaleX(1.0953);-webkit-text-stroke:0.9px #2b2b2b;letter-spacing:0.900px">Dashboard</span>
<span class="t" style="left:504.00px;top:186.25px;font-size:29px;font-weight:400;color:#54657e;letter-spacing:0.477px">Transaksi</span>
<span class="t" style="left:691.50px;top:186.25px;font-size:29px;font-weight:400;color:#54657e;letter-spacing:-0.236px">Kas</span>
<span class="t" style="left:799.00px;top:186.25px;font-size:29px;font-weight:400;color:#54657e;letter-spacing:0.648px">Suplier</span>
<span class="t" style="left:951.89px;top:186.25px;font-size:29px;font-weight:400;color:#54657e;transform:scaleX(1.0549);letter-spacing:0.900px">Pelanggan</span>
<span class="t" style="left:1162.98px;top:186.25px;font-size:29px;font-weight:400;color:#54657e;transform:scaleX(1.0223);letter-spacing:0.900px">Surat Jalan</span>
<span class="t" style="left:1380.23px;top:186.30px;font-size:28px;font-weight:400;color:#2b2b2b;transform:scaleX(1.1083);-webkit-text-stroke:0.9px #2b2b2b;letter-spacing:0.900px">Barang</span>
<span class="t" style="left:1545.00px;top:186.25px;font-size:29px;font-weight:400;color:#54657e;letter-spacing:0.537px">Transfer</span>
<span class="t" style="left:1715.00px;top:186.25px;font-size:29px;font-weight:400;color:#54657e;letter-spacing:0.825px">Rekap</span>
<span class="t" style="left:1859.90px;top:186.25px;font-size:29px;font-weight:400;color:#54657e;transform:scaleX(1.0488);letter-spacing:0.900px">Laporan</span>
<span class="t" style="left:2033.94px;top:186.25px;font-size:29px;font-weight:400;color:#54657e;transform:scaleX(1.0276);letter-spacing:0.900px">Master</span>
<span class="t" style="left:2188.91px;top:186.25px;font-size:29px;font-weight:400;color:#54657e;transform:scaleX(1.0456);letter-spacing:0.900px">Pengaturan</span>
<span class="t" style="left:300.14px;top:299.83px;font-size:36px;font-weight:700;color:#77787b;transform:scaleX(1.0573);-webkit-text-stroke:0.5px #77787b;letter-spacing:0.900px">Barang Cabang</span>
<span class="t" style="left:2058.44px;top:305.11px;font-size:30px;font-weight:400;color:#77787b;transform:scaleX(1.0281);letter-spacing:0.900px">Dashboard</span>
<span class="t" style="left:2261.65px;top:305.11px;font-size:30px;font-weight:400;color:#52bcc8;transform:scaleX(1.0231);letter-spacing:0.900px">Barang Cabang</span>
<span class="t" style="left:2554.00px;top:305.30px;font-size:28px;font-weight:700;color:#57b98e;transform:scaleX(1.0673);letter-spacing:0.900px">Tambah Data</span>
<span class="t" style="left:2841.60px;top:305.30px;font-size:28px;font-weight:700;color:#f4c04a;letter-spacing:0.655px">Filter Data</span>
<span class="t" style="left:356.38px;top:552.10px;font-size:28px;font-weight:400;color:#2e2e2e;transform:scaleX(1.0163);-webkit-text-stroke:0.8px #2e2e2e;letter-spacing:0.900px">Show</span>
<span class="t" style="left:448.63px;top:552.10px;font-size:28px;font-weight:400;color:#2e2e2e;transform:scaleX(0.8843);-webkit-text-stroke:0.8px #2e2e2e;letter-spacing:-0.300px">10</span>
<span class="t" style="left:526.33px;top:552.10px;font-size:28px;font-weight:400;color:#2e2e2e;transform:scaleX(1.0739);-webkit-text-stroke:0.8px #2e2e2e;letter-spacing:0.900px">entries</span>
<span class="t" style="left:2528.35px;top:552.10px;font-size:28px;font-weight:400;color:#2e2e2e;transform:scaleX(1.0452);-webkit-text-stroke:0.8px #2e2e2e;letter-spacing:0.900px">Search:</span>
<span class="t" style="left:376.40px;top:679.11px;font-size:30px;font-weight:700;color:#616161;-webkit-text-stroke:0.8px #616161;letter-spacing:0.842px">Nama Barang</span>
<span class="t" style="left:981.90px;top:679.11px;font-size:30px;font-weight:700;color:#616161;-webkit-text-stroke:0.8px #616161;letter-spacing:-0.038px">Kode</span>
<span class="t" style="left:1262.58px;top:679.11px;font-size:30px;font-weight:700;color:#616161;transform:scaleX(0.9109);-webkit-text-stroke:0.8px #616161;letter-spacing:-0.300px">HPP</span>
<span class="t" style="left:1516.40px;top:679.11px;font-size:30px;font-weight:700;color:#616161;-webkit-text-stroke:0.8px #616161;letter-spacing:-0.300px">Harga Jual 1</span>
<span class="t" style="left:1763.90px;top:679.11px;font-size:30px;font-weight:700;color:#616161;-webkit-text-stroke:0.8px #616161;letter-spacing:0.179px">Harga Jual 2</span>
<span class="t" style="left:2012.40px;top:679.11px;font-size:30px;font-weight:700;color:#616161;-webkit-text-stroke:0.8px #616161;letter-spacing:-0.279px">Ready Stock</span>
<span class="t" style="left:2316.10px;top:679.11px;font-size:30px;font-weight:700;color:#616161;-webkit-text-stroke:0.8px #616161;letter-spacing:-0.217px">Limit</span>
<span class="t" style="left:2457.18px;top:679.11px;font-size:30px;font-weight:700;color:#616161;transform:scaleX(1.0180);-webkit-text-stroke:0.8px #616161;letter-spacing:0.900px">Cabang</span>
<span class="t" style="left:2809.90px;top:679.11px;font-size:30px;font-weight:700;color:#616161;transform:scaleX(0.9765);-webkit-text-stroke:0.8px #616161;letter-spacing:-0.300px">Aksi</span>
<span class="t" style="left:376.93px;top:784.45px;font-size:29px;font-weight:400;color:#77797b;transform:scaleX(1.0714)">0</span>
<span class="t" style="left:1262.00px;top:784.45px;font-size:29px;font-weight:400;color:#77797b;letter-spacing:0.058px">Rp. 30.800 / Dus</span>
<span class="t" style="left:1516.00px;top:784.45px;font-size:29px;font-weight:400;color:#77797b;letter-spacing:-0.016px">Rp. 37.000/Dus</span>
<span class="t" style="left:1763.50px;top:784.45px;font-size:29px;font-weight:400;color:#77797b;letter-spacing:0.222px">Rp. 36.000/Dus</span>
<span class="t" style="left:2013.00px;top:784.45px;font-size:29px;font-weight:400;color:#77797b;letter-spacing:0.111px">0 Dus</span>
<span class="t" style="left:2316.78px;top:784.45px;font-size:29px;font-weight:400;color:#77797b;transform:scaleX(1.0184);letter-spacing:0.900px">30</span>
<span class="t" style="left:2458.00px;top:784.45px;font-size:29px;font-weight:400;color:#77797b;letter-spacing:0.839px">Aqua Home Service</span>
<span class="t" style="left:2458.20px;top:824.45px;font-size:29px;font-weight:400;color:#77797b;transform:scaleX(0.9820);letter-spacing:-0.300px">AVON</span>
<span class="t" style="left:377.38px;top:926.45px;font-size:29px;font-weight:400;color:#77797b;transform:scaleX(1.0184);letter-spacing:0.900px">00</span>
<span class="t" style="left:1262.00px;top:926.45px;font-size:29px;font-weight:400;color:#77797b;letter-spacing:0.165px">Rp. 40.800 / Dus</span>
<span class="t" style="left:1516.00px;top:926.45px;font-size:29px;font-weight:400;color:#77797b;letter-spacing:-0.001px">Rp. 47.000/Dus</span>
<span class="t" style="left:1764.00px;top:926.45px;font-size:29px;font-weight:400;color:#77797b;letter-spacing:0.230px">Rp. 46.000/Dus</span>
<span class="t" style="left:2013.00px;top:926.45px;font-size:29px;font-weight:400;color:#77797b;letter-spacing:0.161px">0 Dus</span>
<span class="t" style="left:2316.88px;top:926.45px;font-size:29px;font-weight:400;color:#77797b;transform:scaleX(1.0152);letter-spacing:0.900px">30</span>
<span class="t" style="left:2458.00px;top:926.45px;font-size:29px;font-weight:400;color:#77797b;letter-spacing:0.827px">Aqua Home Service</span>
<span class="t" style="left:2458.20px;top:966.45px;font-size:29px;font-weight:400;color:#77797b;transform:scaleX(0.9820);letter-spacing:-0.300px">AVON</span>
<span class="t" style="left:377.40px;top:1068.45px;font-size:29px;font-weight:400;color:#77797b;letter-spacing:0.068px">3M Isolasi listrik</span>
<span class="t" style="left:982.26px;top:1068.45px;font-size:29px;font-weight:400;color:#77797b;transform:scaleX(0.9686);letter-spacing:-0.300px">List277</span>
<span class="t" style="left:1262.03px;top:1068.45px;font-size:29px;font-weight:400;color:#77797b;transform:scaleX(0.9866);letter-spacing:-0.300px">Rp. 9.250 / PCS</span>
<span class="t" style="left:1516.09px;top:1068.45px;font-size:29px;font-weight:400;color:#77797b;transform:scaleX(0.9551);letter-spacing:-0.300px">Rp. 15.000/PCS</span>
<span class="t" style="left:2013.07px;top:1068.45px;font-size:29px;font-weight:400;color:#77797b;transform:scaleX(0.9290);letter-spacing:-0.300px">2 PCS</span>
<span class="t" style="left:2317.00px;top:1068.45px;font-size:29px;font-weight:400;color:#77797b">3</span>
<span class="t" style="left:2458.00px;top:1068.45px;font-size:29px;font-weight:400;color:#77797b;letter-spacing:0.002px">TB. Sinar Terang</span>
<span class="t" style="left:377.40px;top:1210.45px;font-size:29px;font-weight:400;color:#77797b;letter-spacing:0.599px">3M Masker Disposable</span>
<span class="t" style="left:983.06px;top:1210.45px;font-size:29px;font-weight:400;color:#77797b;transform:scaleX(1.1375);letter-spacing:0.900px">mdp</span>
<span class="t" style="left:1262.04px;top:1210.45px;font-size:29px;font-weight:400;color:#77797b;transform:scaleX(0.9817);letter-spacing:-0.300px">Rp. 7.000 / PCS</span>
<span class="t" style="left:1516.00px;top:1210.45px;font-size:29px;font-weight:400;color:#77797b;letter-spacing:-0.300px">Rp. 9.000/PCS</span>
<span class="t" style="left:2013.06px;top:1210.45px;font-size:29px;font-weight:400;color:#77797b;transform:scaleX(0.9401);letter-spacing:-0.300px">0 PCS</span>
<span class="t" style="left:2316.93px;top:1210.45px;font-size:29px;font-weight:400;color:#77797b;transform:scaleX(1.0714)">5</span>
<span class="t" style="left:2458.00px;top:1210.45px;font-size:29px;font-weight:400;color:#77797b;letter-spacing:0.002px">TB. Sinar Terang</span>
<span class="t" style="left:377.00px;top:1352.45px;font-size:29px;font-weight:400;color:#77797b;letter-spacing:-0.058px">808 Kunci Laci HL502P</span>
<span class="t" style="left:982.94px;top:1352.45px;font-size:29px;font-weight:400;color:#77797b;transform:scaleX(1.0644);letter-spacing:0.900px">pint9</span>
<span class="t" style="left:1262.12px;top:1352.45px;font-size:29px;font-weight:400;color:#77797b;transform:scaleX(0.9404);letter-spacing:-0.300px">Rp. 13.333 / PCS</span>
<span class="t" style="left:1516.00px;top:1352.45px;font-size:29px;font-weight:400;color:#77797b;letter-spacing:-0.300px">Rp. 20.000/PCS</span>
<span class="t" style="left:1763.89px;top:1352.45px;font-size:29px;font-weight:400;color:#77797b;transform:scaleX(0.9546);letter-spacing:-0.300px">Rp. 19.000/PCS</span>
<span class="t" style="left:2012.84px;top:1352.45px;font-size:29px;font-weight:400;color:#77797b;transform:scaleX(0.8284);letter-spacing:-0.300px">1 PCS</span>
<span class="t" style="left:2317.00px;top:1352.45px;font-size:29px;font-weight:400;color:#77797b">3</span>
<span class="t" style="left:2458.00px;top:1352.45px;font-size:29px;font-weight:400;color:#77797b;letter-spacing:0.002px">TB. Sinar Terang</span>
<span class="t" style="left:377.00px;top:1494.45px;font-size:29px;font-weight:400;color:#77797b;letter-spacing:0.012px">808 Kunci Laci HL508P</span>
<span class="t" style="left:983.00px;top:1494.45px;font-size:29px;font-weight:400;color:#77797b;letter-spacing:-0.177px">pint10</span>
<span class="t" style="left:1262.10px;top:1494.45px;font-size:29px;font-weight:400;color:#77797b;transform:scaleX(0.9505);letter-spacing:-0.300px">Rp. 12.500 / PCS</span>
<span class="t" style="left:1516.09px;top:1494.45px;font-size:29px;font-weight:400;color:#77797b;transform:scaleX(0.9541);letter-spacing:-0.300px">Rp. 18.000/PCS</span>
<span class="t" style="left:1763.92px;top:1494.45px;font-size:29px;font-weight:400;color:#77797b;transform:scaleX(0.9423);letter-spacing:-0.300px">Rp. 17.500/PCS</span>
<span class="t" style="left:2013.06px;top:1494.45px;font-size:29px;font-weight:400;color:#77797b;transform:scaleX(0.9388);letter-spacing:-0.300px">8 PCS</span>
<span class="t" style="left:2317.00px;top:1494.45px;font-size:29px;font-weight:400;color:#77797b">3</span>
<span class="t" style="left:2458.00px;top:1494.45px;font-size:29px;font-weight:400;color:#77797b;letter-spacing:0.002px">TB. Sinar Terang</span>
<span class="t" style="left:378.00px;top:1636.45px;font-size:29px;font-weight:400;color:#77797b;letter-spacing:0.063px">ABC White Doff</span>
<span class="t" style="left:982.87px;top:1636.45px;font-size:29px;font-weight:400;color:#77797b;transform:scaleX(1.1263);letter-spacing:0.900px">abc</span>
<span class="t" style="left:1262.00px;top:1636.45px;font-size:29px;font-weight:400;color:#77797b;letter-spacing:-0.300px">Rp. 33.075 / KG</span>
<span class="t" style="left:1516.00px;top:1636.45px;font-size:29px;font-weight:400;color:#77797b;letter-spacing:-0.299px">Rp. 37.000/KG</span>
<span class="t" style="left:2013.03px;top:1636.45px;font-size:29px;font-weight:400;color:#77797b;transform:scaleX(0.9708);letter-spacing:-0.300px">5 KG</span>
<span class="t" style="left:2316.93px;top:1636.45px;font-size:29px;font-weight:400;color:#77797b;transform:scaleX(1.0714)">0</span>
<span class="t" style="left:2458.00px;top:1636.45px;font-size:29px;font-weight:400;color:#77797b;letter-spacing:0.002px">TB. Sinar Terang</span>
<!-- bottom shadow -->
<div class="a" style="left:1000px;top:1752px;width:1340px;height:60px;border-radius:10px;box-shadow:0 0 70px 10px rgba(60,60,70,.28)"></div>
<!-- right black strip -->
<div class="a" style="left:3330px;top:0;width:6px;height:1722px;background:#060606"></div>
</div>
<script>(function(){var w=window.innerWidth||0;if(w>0&&Math.abs(w-3336)>3){var s=w/3336;document.documentElement.style.overflow="hidden";document.body.style.transformOrigin="0 0";document.body.style.transform="scale("+s+")";}})();</script>
</body></html>
